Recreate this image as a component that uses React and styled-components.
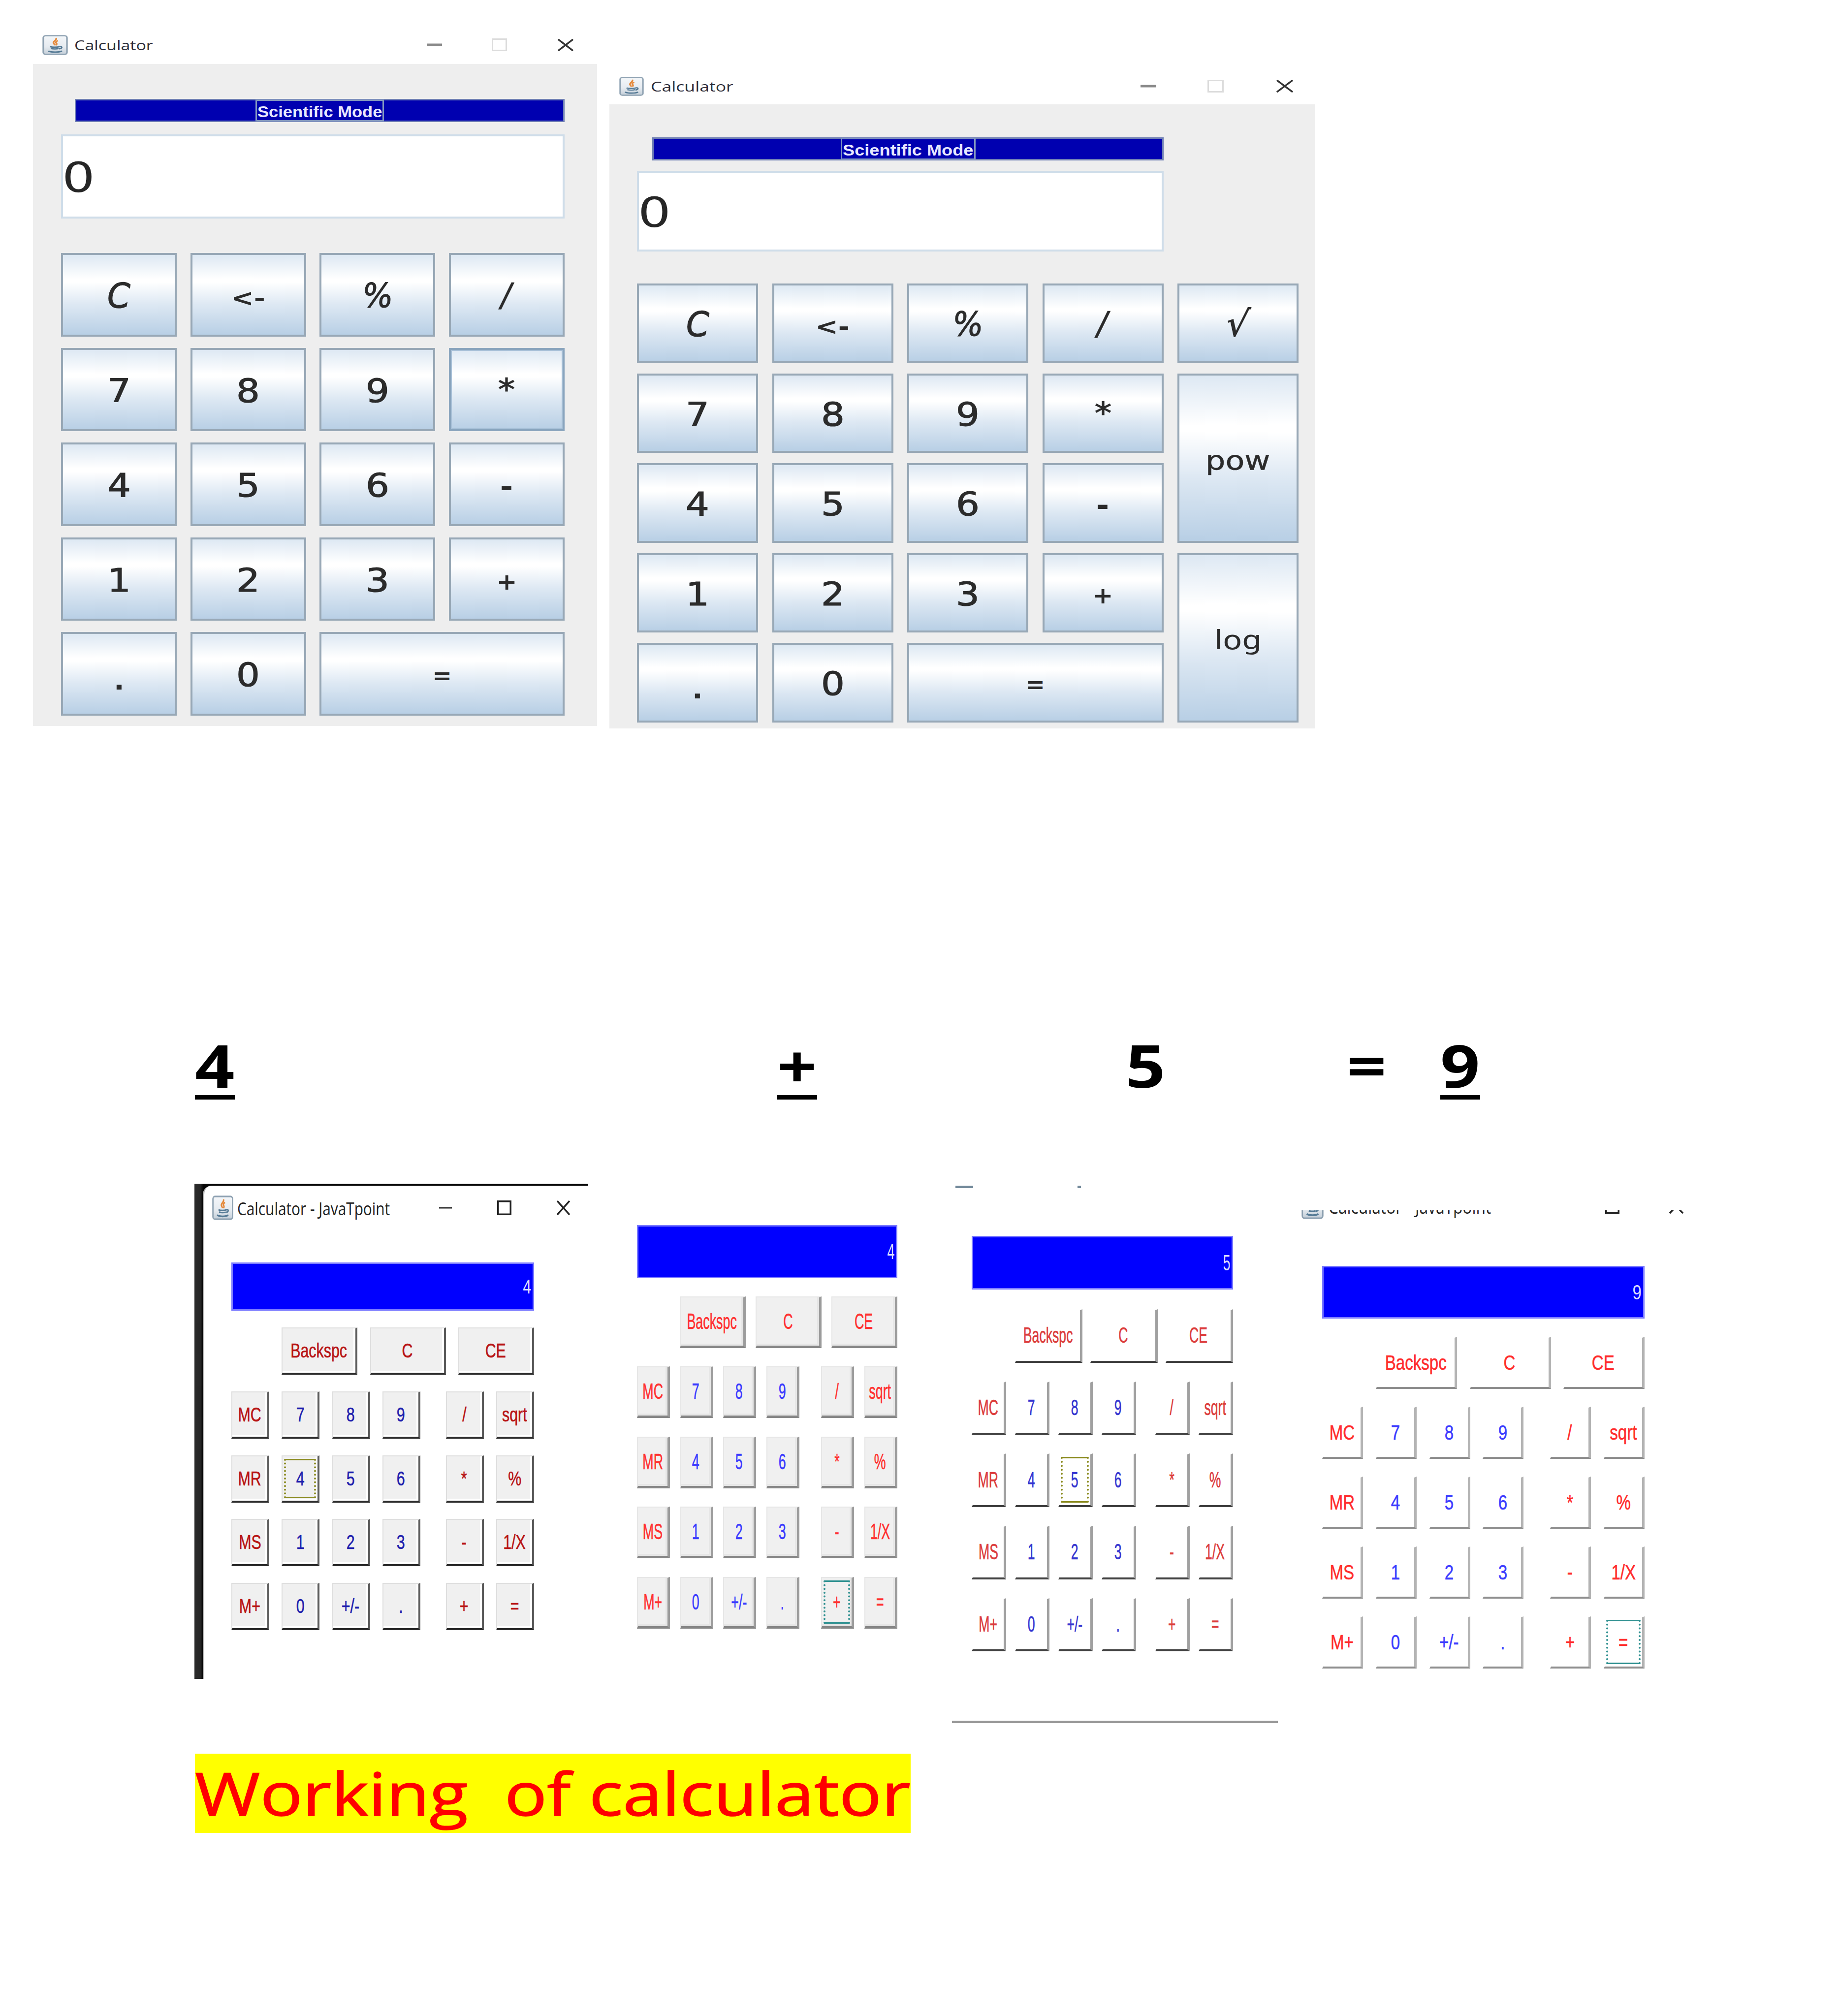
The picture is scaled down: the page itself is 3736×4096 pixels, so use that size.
import React, { useLayoutEffect, useRef, useState } from "react";
import styled, { createGlobalStyle, css } from "styled-components";

const GlobalStyle = createGlobalStyle`
  * { box-sizing: border-box; }
  body { margin: 0; background: #fff; overflow: hidden; }
`;

const UI_FONT = `"Open Sans", "Noto Sans", sans-serif`;
const KEY_FONT = `"DejaVu Sans", sans-serif`;
const AWT_FONT = `"Liberation Sans", Arial, sans-serif`;
const DOC_FONT = `"Open Sans", "Noto Sans", sans-serif`;

/* ---------- text stretched to a given width ---------- */

const FitBox = styled.span`
  display: block;
  flex: none;
  width: ${(p) => p.$w}px;
  white-space: pre;
`;
const FitInner = styled.span`
  display: inline-block;
  transform-origin: 0 50%;
  vertical-align: top;
`;

function Fit({ width, children }) {
  const ref = useRef(null);
  const [scale, setScale] = useState(1);
  useLayoutEffect(() => {
    setScale(width / ref.current.offsetWidth);
  }, [width]);
  return (
    <FitBox $w={width}>
      <FitInner ref={ref} style={{ transform: `scaleX(${scale})` }}>
        {children}
      </FitInner>
    </FitBox>
  );
}

/* ---------- icons ---------- */

const IconSvg = styled.svg`
  display: block;
  flex: none;
  width: ${(p) => p.$w}px;
  height: ${(p) => p.$h}px;
  margin-left: ${(p) => p.$ml || 0}px;
`;

const JavaIcon = ({ w, h, ml }) => (
  <IconSvg $w={w} $h={h} $ml={ml} viewBox="0 0 32 32" preserveAspectRatio="none">
    <defs>
      <linearGradient id="javaFace" x1="0" y1="0" x2="0" y2="1">
        <stop offset="0" stopColor="#f4f7fa" />
        <stop offset="0.6" stopColor="#e6ebf0" />
        <stop offset="1" stopColor="#c3ced8" />
      </linearGradient>
    </defs>
    <rect x="1.2" y="1.2" width="29.6" height="29.6" rx="3" fill="url(#javaFace)" stroke="#8fa2b2" strokeWidth="2" />
    <path d="M17 5c2 3-4 5-3 8 .4 1.400 1.600 2 1.600 3.500M19.500 9c-3 1.500-3 3-1.800 4.500.6.900 0 2-.7 2.800" fill="none" stroke="#e58a3c" strokeWidth="2.200" />
    <path d="M9.500 18.500c3 1.200 9 1.200 12 0M10.500 21.500c3 1 7.500 1 10 0M21.500 18.500c4-1 3.500 3-.5 3.500" fill="none" stroke="#557a95" strokeWidth="2" />
    <path d="M7.500 25.500c4 2.200 13 2.200 17 0" fill="none" stroke="#557a95" strokeWidth="2.200" />
  </IconSvg>
);

const MinIcon = ({ w, h, ml, color, sw }) => (
  <IconSvg $w={w} $h={h} $ml={ml} viewBox={`0 0 ${w} ${h}`}>
    <path d={`M0 ${h / 2}H${w}`} stroke={color} strokeWidth={sw} />
  </IconSvg>
);
const MaxIcon = ({ w, h, ml, color, sw }) => (
  <IconSvg $w={w} $h={h} $ml={ml} viewBox={`0 0 ${w} ${h}`}>
    <rect x={sw / 2} y={sw / 2} width={w - sw} height={h - sw} fill="none" stroke={color} strokeWidth={sw} />
  </IconSvg>
);
const CloseIcon = ({ w, h, ml, color, sw }) => (
  <IconSvg $w={w} $h={h} $ml={ml} viewBox={`0 0 ${w} ${h}`}>
    <path d={`M1 1L${w - 1} ${h - 1}M${w - 1} 1L1 ${h - 1}`} stroke={color} strokeWidth={sw} />
  </IconSvg>
);

/* ---------- page ---------- */

const Page = styled.main`
  width: 3736px;
  height: 4096px;
  overflow: hidden;
  background: #fff;
  display: flex;
  flex-direction: column;
`;

/* ---------- swing calculators ---------- */

const SwingRow = styled.section`
  height: 2104px;
  flex: none;
  display: flex;
  align-items: flex-start;
  gap: 25px;
  padding-left: 67px;
`;

const SwingWindow = styled.article`
  width: ${(p) => p.$w}px;
  margin-top: ${(p) => p.$top}px;
`;

const TitleBar = styled.header`
  height: ${(p) => p.$h}px;
  display: flex;
  align-items: center;
  padding-left: ${(p) => p.$pl}px;
`;

const TitleText = styled.div`
  margin-left: ${(p) => p.$ml}px;
  padding-top: 2px;
  font: 400 ${(p) => p.$size}px/1.2 ${UI_FONT};
  color: ${(p) => p.$color || "#2c2c38"};
`;

const SwingBody = styled.div`
  background: #eee;
  height: ${(p) => p.$h}px;
  padding: ${(p) => p.$pad};
`;

const ModeBar = styled.div`
  height: 47px;
  width: ${(p) => p.$w}px;
  margin-left: ${(p) => p.$ml}px;
  background: #0000b0;
  border: 3px solid #7080b4;
  display: flex;
  justify-content: center;
`;

const ModeLabel = styled.div`
  display: flex;
  align-items: center;
  justify-content: center;
  margin: -2px 0;
  padding-top: 5px;
  border: 3px solid #8296c0;
  width: ${(p) => p.$w}px;
  color: #e8e8ff;
  font: 700 31px/1 ${AWT_FONT};
`;

const Field = styled.div`
  width: ${(p) => p.$w}px;
  height: ${(p) => p.$h}px;
  margin-top: ${(p) => p.$mt}px;
  background: #fff;
  border: 4px solid #cfdde9;
  display: flex;
  align-items: center;
  color: #262626;
  font: 400 84px/1 ${KEY_FONT};

  span {
    transform: scaleX(1.25);
    transform-origin: 0 50%;
    padding-top: 5px;
    margin-left: -2px;
  }
`;

const KeyGrid = styled.div`
  display: grid;
  margin-top: ${(p) => p.$mt}px;
  grid-template-columns: repeat(${(p) => p.$cols}, ${(p) => p.$w}px);
  grid-template-rows: repeat(5, ${(p) => p.$h}px);
  gap: ${(p) => p.$gap};
`;

const Key = styled.button`
  appearance: none;
  margin: 0;
  padding: 0;
  border-radius: 0;
  border: 4px solid ${(p) => (p.$focus ? "#8aa5be" : "#98a8b6")};
  ${(p) => p.$focus && css`box-shadow: inset 0 0 0 2px #a9c1d8;`}
  background: linear-gradient(#dde8f3 0%, #fff 30%, #fff 34%, #dde8f3 62%, #b8cfe5 100%);
  grid-column: span ${(p) => p.$cs || 1};
  grid-row: span ${(p) => p.$rs || 1};
  display: flex;
  align-items: center;
  justify-content: center;
  color: #2b2b2b;
  font: 400 66px/1 ${KEY_FONT};
`;

const Glyph = styled.span`
  display: block;
  transform: scaleX(${(p) => p.$sx || 1.14}) skewX(${(p) => p.$skew || 0}deg);
  font-size: ${(p) => p.$size}px;
  font-weight: ${(p) => (p.$bold ? 700 : 400)};
  font-style: ${(p) => (p.$italic ? "italic" : "normal")};
  -webkit-text-stroke: ${(p) => p.$stroke}px #2b2b2b;
  padding-top: ${(p) => p.$drop || 0}px;
`;

const GLYPHS = {
  C: { size: 70, italic: true, sx: 0.96, drop: 5 },
  "<-": { size: 48, bold: true, drop: 12, sx: 1.16 },
  "%": { size: 68, sx: 0.94, drop: 4, skew: -8 },
  "/": { size: 66, sx: 1.05, drop: 3, skew: -9, stroke: 0.5 },
  "*": { size: 60, drop: 0, sx: 1.15 },
  "-": { size: 58, bold: true, drop: 11, sx: 1.1 },
  "+": { size: 47, bold: true, drop: 10, sx: 1.06 },
  "=": { size: 47, bold: true, drop: 8, sx: 1 },
  "√": { size: 72, drop: 3, sx: 0.98, skew: -8 },
  ".": { size: 52, bold: true, drop: 28, sx: 1.1 },
  pow: { size: 53, drop: 9, sx: 1.2, stroke: 0.5 },
  log: { size: 54, drop: 10, sx: 1.18, stroke: 0 },
};

const SwingKey = ({ label, focus, cs, rs }) => {
  const g = GLYPHS[label] || { size: 66, drop: 7 };
  const stroke = g.bold ? 0 : g.stroke ?? 1.2;
  return (
    <Key $focus={focus} $cs={cs} $rs={rs}>
      <Glyph $size={g.size} $bold={g.bold} $italic={g.italic} $drop={g.drop} $sx={g.sx} $skew={g.skew} $stroke={stroke}>
        {label}
      </Glyph>
    </Key>
  );
};

const BASIC_KEYS = [
  "C", "<-", "%", "/",
  "7", "8", "9", "*",
  "4", "5", "6", "-",
  "1", "2", "3", "+",
  ".", "0", "=",
];

const SCI_KEYS = [
  "C", "<-", "%", "/", "√",
  "7", "8", "9", "*", "pow",
  "4", "5", "6", "-",
  "1", "2", "3", "+", "log",
  ".", "0", "=",
];

function BasicCalculator() {
  return (
    <SwingWindow $w={1146} $top={52}>
      <TitleBar $h={78} $pl={19}>
        <JavaIcon w={52} h={41} />
        <TitleText $ml={13} $size={28}><Fit width={160}>Calculator</Fit></TitleText>
        <MinIcon w={30} h={26} ml={557} color="#8a8a8a" sw={5} />
        <MaxIcon w={31} h={26} ml={101} color="#dcdcdc" sw={3} />
        <CloseIcon w={32} h={25} ml={103} color="#333" sw={3.5} />
      </TitleBar>
      <SwingBody $h={1345} $pad="71px 0 0 57px">
        <ModeBar $w={995} $ml={28}>
          <ModeLabel $w={261}><Fit width={253}>Scientific Mode</Fit></ModeLabel>
        </ModeBar>
        <Field $w={1023} $h={171} $mt={24.5}><span>0</span></Field>
        <KeyGrid $cols={4} $w={235} $h={169.5} $gap="23px 27.67px" $mt={70.5}>
          {BASIC_KEYS.map((k) => (
            <SwingKey key={k} label={k} focus={k === "*"} cs={k === "=" ? 2 : 1} />
          ))}
        </KeyGrid>
      </SwingBody>
    </SwingWindow>
  );
}

function ScientificCalculator() {
  return (
    <SwingWindow $w={1434} $top={138}>
      <TitleBar $h={74} $pl={20}>
        <JavaIcon w={50} h={39} />
        <TitleText $ml={14} $size={28}><Fit width={168}>Calculator</Fit></TitleText>
        <MinIcon w={32} h={26} ml={827} color="#8a8a8a" sw={5} />
        <MaxIcon w={33} h={26} ml={104} color="#dcdcdc" sw={3} />
        <CloseIcon w={34} h={26} ml={107} color="#333" sw={3.5} />
      </TitleBar>
      <SwingBody $h={1268} $pad="67px 0 0 56px">
        <ModeBar $w={1039} $ml={31}>
          <ModeLabel $w={274}><Fit width={265}>Scientific Mode</Fit></ModeLabel>
        </ModeBar>
        <Field $w={1070} $h={164} $mt={21}><span>0</span></Field>
        <KeyGrid $cols={5} $w={246} $h={161.5} $gap="21px 28.5px" $mt={65}>
          {SCI_KEYS.map((k) => (
            <SwingKey
              key={k}
              label={k}
              cs={k === "=" ? 2 : 1}
              rs={k === "pow" || k === "log" ? 2 : 1}
            />
          ))}
        </KeyGrid>
      </SwingBody>
    </SwingWindow>
  );
}

/* ---------- equation ---------- */

const Equation = styled.section`
  flex: none;
  height: 301px;
  display: flex;
  align-items: flex-start;
  padding-left: 396px;
`;

const Term = styled.div`
  width: 81px;
  margin-left: ${(p) => p.$ml || 0}px;
  height: 130px;
  border-bottom: 9px solid ${(p) => (p.$line ? "#000" : "transparent")};
  font: 700 120px/120px ${DOC_FONT};
  color: #000;
`;

/* ---------- AWT calculators ---------- */

const AwtRow = styled.section`
  flex: none;
  height: 1158px;
  display: flex;
  align-items: flex-start;
  padding-left: 395px;
`;

const AwtPanel = styled.article`
  width: ${(p) => p.$w}px;
  height: ${(p) => p.$h}px;
  margin-left: ${(p) => p.$ml || 0}px;
  margin-top: ${(p) => p.$mt || 0}px;
  overflow: hidden;
  ${(p) => p.$line && css`border-bottom: 5px solid #979797;`}
`;

const DarkEdge = styled.div`
  background: linear-gradient(90deg, #2b2b2b 0, #262626 12px, #050505 18px);
  width: 800px;
  height: 1006px;
  padding: 4px 0 0 17px;
`;

const LightSheet = styled.div`
  background: #fff;
  height: 1002px;
  border-top-left-radius: 18px;
  border-left: 3px solid #b9b9b9;
`;

const AwtBody = styled.div`
  width: ${(p) => p.$w}px;
  margin-left: ${(p) => p.$ml || 0}px;
  padding-top: ${(p) => p.$pt || 0}px;
  font: 400 ${(p) => p.$size}px/1 ${AWT_FONT};
`;

const Display = styled.div`
  height: ${(p) => p.$h}px;
  background: #00f;
  border: 3px solid #7b7bff;
  color: #dcdcff;
  display: flex;
  align-items: center;
  justify-content: flex-end;
  padding-right: 3px;

  span {
    display: block;
    transform: scaleX(${(p) => p.$sx});
    transform-origin: 100% 50%;
  }
`;

const WideRow = styled.div`
  display: flex;
  justify-content: space-between;
  margin-top: ${(p) => p.$mt}px;
  margin-left: ${(p) => p.$ml}px;
  height: ${(p) => p.$h}px;
`;

const PadRow = styled.div`
  display: grid;
  grid-template-columns: repeat(4, ${(p) => p.$w}px) ${(p) => p.$split}px repeat(2, ${(p) => p.$w}px);
  justify-content: space-between;
  height: ${(p) => p.$h}px;
  margin-top: ${(p) => p.$mt}px;
`;

const AwtButton = styled.button`
  appearance: none;
  position: relative;
  margin: 0;
  padding: 0;
  width: ${(p) => p.$w}px;
  border-radius: 0;
  border-style: solid;
  border-color: ${(p) => `${p.$t.edge} ${p.$t.side} ${p.$t.shadow} ${p.$t.edge}`};
  border-width: 2px ${(p) => p.$t.sideW}px ${(p) => p.$t.bottomW}px 2px;
  background: ${(p) => p.$t.face};
  box-shadow: inset -4px -4px 0 ${(p) => p.$t.inner};
  color: ${(p) => (p.$blue ? p.$t.blue : p.$t.red)};
  font: inherit;
  display: flex;
  align-items: center;
  justify-content: center;
  white-space: pre;

  span {
    display: block;
    flex: none;
    transform: scaleX(${(p) => p.$t.sx});
    -webkit-text-stroke: 0.6px currentColor;
  }
`;

const FocusRing = styled.i`
  position: absolute;
  inset: 5px 3px 5px 3px;
  border: 4px dotted ${(p) => p.$c};
  border-top: 3px solid ${(p) => p.$c};
  border-bottom: 3px solid ${(p) => p.$c};
`;

const PAD = [
  ["MC", "7", "8", "9", "/", "sqrt"],
  ["MR", "4", "5", "6", "*", "%"],
  ["MS", "1", "2", "3", "-", "1/X"],
  ["M+", "0", "+/-", ".", "+", "="],
];

const Spacer = styled.div``;

function AwtCalculator({ value, focus, geo, theme }) {
  return (
    <AwtBody $w={geo.w} $ml={geo.ml} $pt={geo.pt} $size={geo.size}>
      <Display $h={geo.display} $sx={theme.sx}><span>{value}</span></Display>
      <WideRow $mt={geo.gap0} $ml={geo.indent} $h={geo.h}>
        {["Backspc", "C", "CE"].map((k) => (
          <AwtButton key={k} $w={geo.wide} $t={theme}><span>{k}</span></AwtButton>
        ))}
      </WideRow>
      {PAD.map((row) => (
        <PadRow key={row[0]} $w={geo.bw} $split={geo.split} $h={geo.h} $mt={geo.gap}>
          {row.map((k, i) => (
            <React.Fragment key={k}>
              {i === 4 && <Spacer />}
              <AwtButton $w={geo.bw} $t={theme} $blue={i > 0 && i < 4}>
                {focus === k && <FocusRing $c={theme.focus} />}
                <span>{k}</span>
              </AwtButton>
            </React.Fragment>
          ))}
        </PadRow>
      ))}
    </AwtBody>
  );
}

const THEMES = {
  a: { face: "#f0f0f0", inner: "#fff", edge: "#dedede", side: "#5c5c5c", sideW: 4, shadow: "#2a2a2a", bottomW: 4, red: "#b81414", blue: "#1e1eae", sx: 0.76, focus: "#8a8a1e" },
  b: { face: "#f0f0f0", inner: "#e6e6e6", edge: "#e6e6e6", side: "#9c9c9c", sideW: 5, shadow: "#868686", bottomW: 5, red: "#ff3030", blue: "#3a3aff", sx: 0.61, focus: "#2e9090" },
  c: { face: "#fff", inner: "#fff", edge: "#fff", side: "#a0a0a0", sideW: 5, shadow: "#404040", bottomW: 4, red: "#dc3c3c", blue: "#3434d0", sx: 0.605, focus: "#8a8a1e" },
  d: { face: "#fff", inner: "#fff", edge: "#fff", side: "#b4b4b4", sideW: 5, shadow: "#8e8e8e", bottomW: 4, red: "#ff2c2c", blue: "#3c3cff", sx: 0.77, focus: "#2e9090" },
};

const CutTitle = styled.div`
  height: 20px;
  overflow: hidden;
  display: flex;
  align-items: flex-end;
`;

const CutTitleInner = styled.div`
  flex: none;
  display: flex;
  align-items: center;
  height: 56px;
`;

const Remnants = styled.div`
  display: flex;
  height: 5px;
  margin-left: 7px;
  gap: 212px;
`;
const Remnant = styled.div`
  width: ${(p) => p.$w}px;
  background: #72899a;
`;

/* ---------- caption ---------- */

const Caption = styled.h1`
  flex: none;
  margin: 0 0 0 396px;
  width: 1454px;
  height: 161px;
  padding-top: 20px;
  background: #ff0;
  color: #f00;
  font: 400 120px/120px ${DOC_FONT};
  -webkit-text-stroke: 1.5px #f00;
`;

export default function App() {
  return (
    <Page>
      <GlobalStyle />
      <SwingRow>
        <BasicCalculator />
        <ScientificCalculator />
      </SwingRow>

      <Equation>
        <Term $line><Fit width={81}>4</Fit></Term>
        <Term $ml={1102} $line><Fit width={81}>+</Fit></Term>
        <Term $ml={627}><Fit width={81}>5</Fit></Term>
        <Term $ml={368}><Fit width={81}>=</Fit></Term>
        <Term $ml={109} $line><Fit width={81}>9</Fit></Term>
      </Equation>

      <AwtRow>
        <AwtPanel $w={800} $h={1006}>
          <DarkEdge>
            <LightSheet>
              <TitleBar $h={90} $pl={16}>
                <JavaIcon w={43} h={50} />
                <TitleText $ml={8} $size={37} $color="#222"><Fit width={310}>Calculator - JavaTpoint</Fit></TitleText>
                <MinIcon w={26} h={30} ml={100} color="#333" sw={3} />
                <MaxIcon w={29} h={30} ml={92} color="#222" sw={3.5} />
                <CloseIcon w={27} h={30} ml={92} color="#222" sw={3.5} />
              </TitleBar>
              <AwtCalculator
                value="4"
                focus="4"
                theme={THEMES.a}
                geo={{ w: 615, ml: 55, pt: 66, size: 40, display: 98, gap0: 34, gap: 33.8, h: 96, indent: 102, wide: 154, bw: 77, split: 1 }}
              />
            </LightSheet>
          </DarkEdge>
        </AwtPanel>

        <AwtPanel $w={560} $h={1007} $ml={99}>
          <AwtCalculator
            value="4"
            focus="+"
            theme={THEMES.b}
            geo={{ w: 529, ml: 0, pt: 84, size: 44, display: 108, gap0: 37, gap: 37.4, h: 105, indent: 87, wide: 134, bw: 67, split: 3 }}
          />
        </AwtPanel>

        <AwtPanel $w={662} $h={1092} $ml={80} $mt={4} $line>
          <Remnants><Remnant $w={36} /><Remnant $w={7} /></Remnants>
          <AwtCalculator
            value="5"
            focus="5"
            theme={THEMES.c}
            geo={{ w: 531, ml: 40, pt: 97, size: 44, display: 109, gap0: 40, gap: 38.2, h: 108.5, indent: 88, wide: 137, bw: 70, split: 3 }}
          />
        </AwtPanel>

        <AwtPanel $w={800} $h={960} $ml={48} $mt={54}>
          <CutTitle>
            <CutTitleInner>
              <JavaIcon w={45} h={52} />
              <TitleText $ml={10} $size={37} $color="#222"><Fit width={330}>Calculator - JavaTpoint</Fit></TitleText>
              <MaxIcon w={29} h={30} ml={232} color="#222" sw={3.5} />
              <CloseIcon w={29} h={30} ml={101} color="#222" sw={3.5} />
            </CutTitleInner>
          </CutTitle>
          <AwtCalculator
            value="9"
            focus="="
            theme={THEMES.d}
            geo={{ w: 655, ml: 42, pt: 93, size: 43, display: 107, gap0: 37, gap: 36, h: 106, indent: 109, wide: 165, bw: 83, split: 2 }}
          />
        </AwtPanel>
      </AwtRow>

      <Caption><Fit width={1454}>{"Working  of calculator"}</Fit></Caption>
    </Page>
  );
}
